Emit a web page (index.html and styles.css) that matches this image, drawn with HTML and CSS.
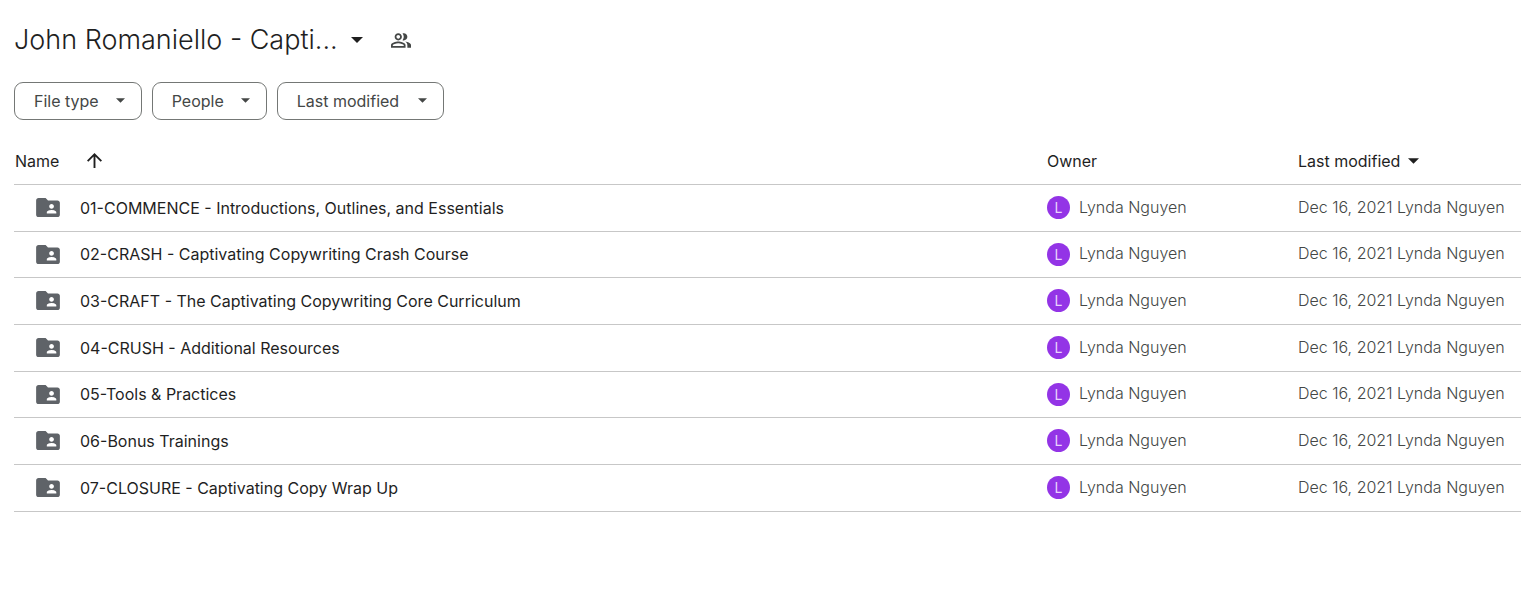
FILE: index.html
```html
<!DOCTYPE html>
<html lang="en">
<head>
<meta charset="utf-8">
<title>Shared folder</title>
<link rel="stylesheet" href="styles.css">
</head>
<body>
<svg class="sprite" aria-hidden="true">
  <symbol id="caret" viewBox="0 0 10 5"><path d="M0 0h10L5 5z"/></symbol>
  <symbol id="folder" viewBox="2 4 20 16"><path d="M20 6h-8l-2-2H4c-1.100 0-2 .9-2 2v12c0 1.100.9 2 2 2h16c1.100 0 2-.9 2-2V8c0-1.100-.9-2-2-2zm-5 3c1.100 0 2 .9 2 2s-.9 2-2 2-2-.9-2-2 .9-2 2-2zm4 8h-8v-1c0-1.330 2.670-2 4-2s4 .67 4 2v1z"/></symbol>
  <symbol id="people" viewBox="1 4 22 16"><path d="M16.670 13.130C18.040 14.060 19 15.320 19 17v3h4v-3c0-2.180-3.570-3.470-6.330-3.870zM15 12c2.210 0 4-1.790 4-4s-1.790-4-4-4c-.47 0-.91.1-1.330.24C14.500 5.270 15 6.580 15 8s-.5 2.730-1.330 3.760c.42.14.86.24 1.330.24zM9 12c2.210 0 4-1.790 4-4s-1.790-4-4-4-4 1.790-4 4 1.790 4 4 4zm0-6c1.100 0 2 .9 2 2s-.9 2-2 2-2-.9-2-2 .9-2 2-2zM9 13c-2.670 0-8 1.340-8 4v3h16v-3c0-2.660-5.330-4-8-4zm6 5H3v-.99C3.200 16.290 6.300 15 9 15s5.800 1.290 6 2v1z"/></symbol>
  <symbol id="arrow-up" viewBox="4 4 16 16"><path d="M4 12l1.410 1.410L11 7.830V20h2V7.830l5.580 5.590L20 12l-8-8-8 8z"/></symbol>
</svg>
<main class="page">
  <header class="heading">
    <h1 class="title"><button class="title-button" type="button">John Romaniello - Capti... <svg class="caret-large"><use href="#caret"/></svg></button></h1>
    <button class="icon-button" type="button" aria-label="Manage access"><svg class="people"><use href="#people"/></svg></button>
  </header>
  <div class="filters">
    <button class="chip" type="button">File type <svg class="caret"><use href="#caret"/></svg></button>
    <button class="chip" type="button">People <svg class="caret"><use href="#caret"/></svg></button>
    <button class="chip chip-wide" type="button">Last modified <svg class="caret"><use href="#caret"/></svg></button>
  </div>
  <table class="files">
    <thead>
      <tr>
        <th class="col-name" scope="col"><button class="sort name-sort" type="button">Name <svg class="arrow"><use href="#arrow-up"/></svg></button></th>
        <th class="col-owner" scope="col">Owner</th>
        <th class="col-modified" scope="col"><button class="sort" type="button">Last modified <svg class="caret-sort"><use href="#caret"/></svg></button></th>
      </tr>
    </thead>
    <tbody>
      <tr><td><div class="file"><svg class="folder"><use href="#folder"/></svg>01-COMMENCE - Introductions, Outlines, and Essentials</div></td><td><div class="owner"><span class="avatar">L</span><span class="person">Lynda Nguyen</span></div></td><td class="modified">Dec 16, 2021 Lynda Nguyen</td></tr>
      <tr><td><div class="file"><svg class="folder"><use href="#folder"/></svg>02-CRASH - Captivating Copywriting Crash Course</div></td><td><div class="owner"><span class="avatar">L</span><span class="person">Lynda Nguyen</span></div></td><td class="modified">Dec 16, 2021 Lynda Nguyen</td></tr>
      <tr><td><div class="file"><svg class="folder"><use href="#folder"/></svg>03-CRAFT - The Captivating Copywriting Core Curriculum</div></td><td><div class="owner"><span class="avatar">L</span><span class="person">Lynda Nguyen</span></div></td><td class="modified">Dec 16, 2021 Lynda Nguyen</td></tr>
      <tr><td><div class="file"><svg class="folder"><use href="#folder"/></svg>04-CRUSH - Additional Resources</div></td><td><div class="owner"><span class="avatar">L</span><span class="person">Lynda Nguyen</span></div></td><td class="modified">Dec 16, 2021 Lynda Nguyen</td></tr>
      <tr><td><div class="file"><svg class="folder"><use href="#folder"/></svg>05-Tools &amp; Practices</div></td><td><div class="owner"><span class="avatar">L</span><span class="person">Lynda Nguyen</span></div></td><td class="modified">Dec 16, 2021 Lynda Nguyen</td></tr>
      <tr><td><div class="file"><svg class="folder"><use href="#folder"/></svg>06-Bonus Trainings</div></td><td><div class="owner"><span class="avatar">L</span><span class="person">Lynda Nguyen</span></div></td><td class="modified">Dec 16, 2021 Lynda Nguyen</td></tr>
      <tr><td><div class="file"><svg class="folder"><use href="#folder"/></svg>07-CLOSURE - Captivating Copy Wrap Up</div></td><td><div class="owner"><span class="avatar">L</span><span class="person">Lynda Nguyen</span></div></td><td class="modified">Dec 16, 2021 Lynda Nguyen</td></tr>
    </tbody>
  </table>
</main>
</body>
</html>
```
FILE: styles.css
```css
* { box-sizing: border-box; }

body {
  margin: 0;
  background: #fff;
  color: #1f1f1f;
  font: 16px/24px Inter, "Liberation Sans", sans-serif;
}

button {
  padding: 0;
  border: 0;
  background: none;
  color: inherit;
  font: inherit;
  cursor: pointer;
}

svg { flex: none; fill: currentColor; }

.sprite { display: none; }

.page { padding: 20px 0 0 14px; }

.heading {
  display: flex;
  align-items: center;
  gap: 28px;
  height: 40px;
}

.title {
  margin: 0;
  font-size: 27px;
  font-weight: 300;
  line-height: 40px;
}

.title-button {
  display: flex;
  align-items: center;
  gap: 13px;
}

.caret-large { width: 12px; height: 6px; }

.icon-button { display: flex; color: #444746; }

.people { width: 20px; height: 15px; }

.filters {
  display: flex;
  gap: 10px;
  margin-top: 22px;
}

.chip {
  display: flex;
  align-items: center;
  justify-content: space-between;
  gap: 17px;
  height: 38px;
  padding: 0 16px 1px 19px;
  border: 1px solid #747775;
  border-radius: 9px;
  color: #444746;
}

.chip-wide { min-width: 167px; }

.caret { width: 9px; height: 5px; }

.files {
  width: 100%;
  margin-top: 18px;
  border-collapse: collapse;
  table-layout: fixed;
}

th, td {
  padding: 0 0 0 1px;
  border-bottom: 1px solid #c7c7c7;
  text-align: left;
  white-space: nowrap;
}

th { height: 46px; font-weight: 400; }

tbody tr { height: 47px; }

tbody tr:nth-child(3n + 2) { height: 46px; }

.col-owner { width: 251px; }

.col-modified { width: 224px; }

.sort { display: flex; align-items: center; gap: 8px; }

.name-sort { gap: 28px; }

.arrow { width: 15px; height: 15px; }

.caret-sort { width: 11px; height: 6px; }

.file {
  display: flex;
  align-items: center;
  gap: 20px;
  padding-left: 21px;
}

.folder { width: 24px; height: 19px; color: #5f6368; }

.owner {
  display: flex;
  align-items: center;
  gap: 9px;
}

.avatar {
  width: 23px;
  height: 23px;
  border-radius: 50%;
  background: #9334e6;
  color: #e9d2fd;
  font-size: 14px;
  line-height: 23px;
  text-align: center;
}

.person, .modified {
  padding-bottom: 2px;
  color: #444746;
  font-weight: 300;
}
```
